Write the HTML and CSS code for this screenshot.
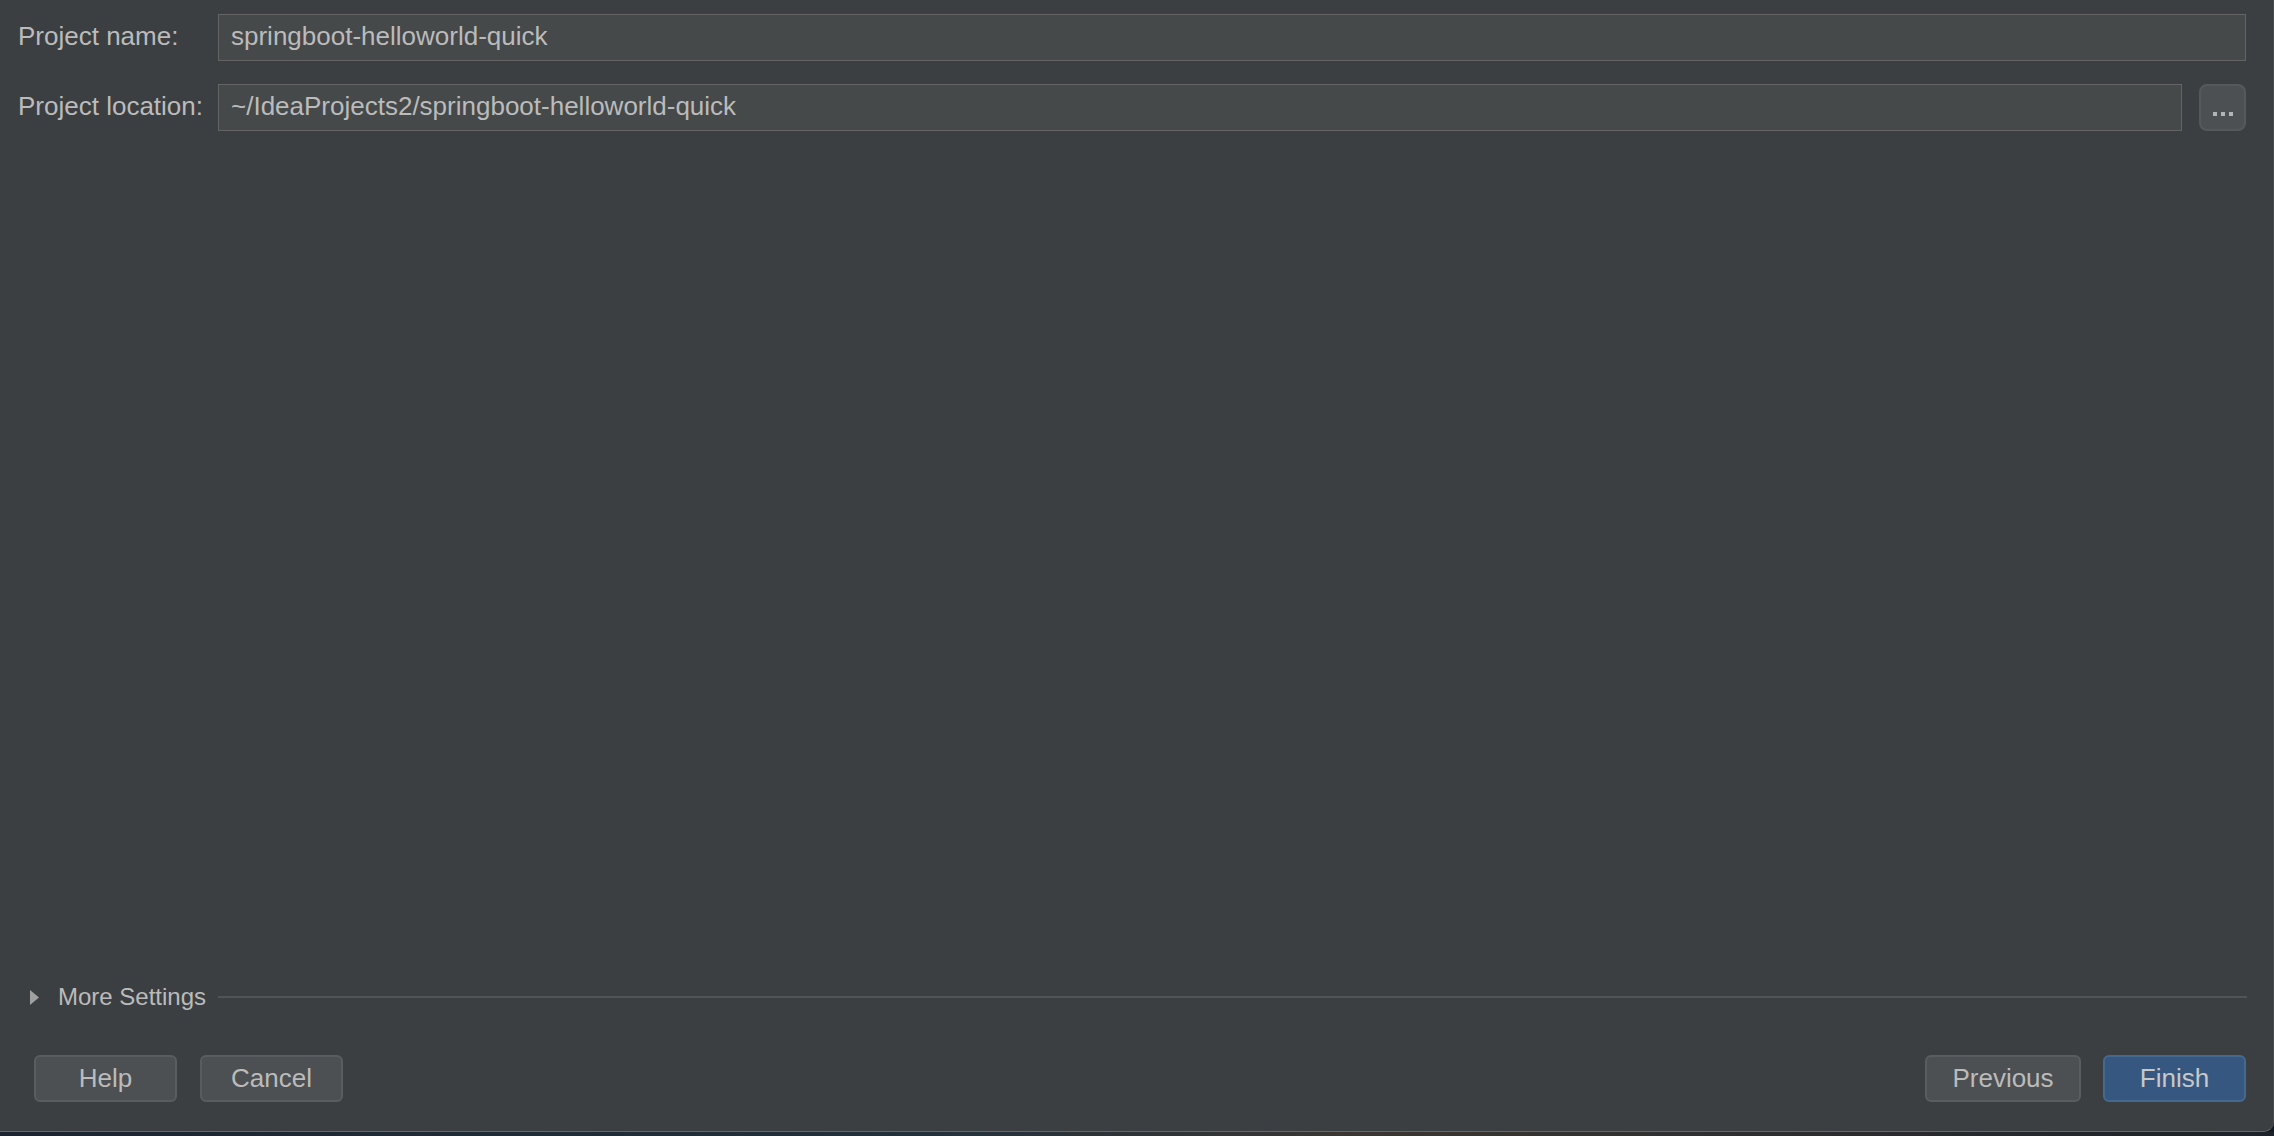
FILE: index.html
```html
<!DOCTYPE html>
<html>
<head>
  <title>New Project</title>
  <link rel="stylesheet" href="styles.css">
</head>
<body>
  <div class="window">
    <div class="form">
      <label class="label" for="project-name">Project name:</label>
      <div class="field wide"><input id="project-name" type="text" value="springboot-helloworld-quick"></div>

      <label class="label" for="project-location">Project location:</label>
      <div class="field"><input id="project-location" type="text" value="~/IdeaProjects2/springboot-helloworld-quick"></div>
      <button class="browse" title="Browse">
        <svg width="20" height="4" viewBox="0 0 20 4">
          <rect x="0" y="0" width="4" height="4" fill="#b4b4b4"/>
          <rect x="8" y="0" width="4" height="4" fill="#b4b4b4"/>
          <rect x="16" y="0" width="4" height="4" fill="#b4b4b4"/>
        </svg>
      </button>
    </div>

    <div class="spacer"></div>

    <div class="more-settings">
      <svg class="arrow" width="10" height="15" viewBox="0 0 10 15">
        <polygon points="0,0 9,7.5 0,15" fill="#a0a0a0"/>
      </svg>
      <span class="more-text">More Settings</span>
      <div class="rule"></div>
    </div>

    <div class="actions">
      <div class="group">
        <button class="btn">Help</button>
        <button class="btn">Cancel</button>
      </div>
      <div class="group">
        <button class="btn previous">Previous</button>
        <button class="btn primary">Finish</button>
      </div>
    </div>
  </div>
  <div class="desktop"></div>
</body>
</html>
```

FILE: styles.css
```css
html, body {
  margin: 0;
  height: 100%;
}
body {
  font-family: "Liberation Sans", Arial, sans-serif;
  background-color: #141a22;
  color: #bbbbbb;
  overflow: hidden;
}
.window {
  height: 1132px;
  background-color: #3c3f41;
  border-bottom: 1px solid #646668;
  border-right: 1px solid #4a4c4e;
  border-bottom-right-radius: 10px;
  box-sizing: border-box;
  width: 2274px;
  display: flex;
  flex-direction: column;
  padding: 14px 27px 29px 17px;
}
.desktop {
  height: 4px;
  background: linear-gradient(90deg, #1b2430, #22303c 40%, #3a3632 60%, #1c222a);
}
.form {
  display: grid;
  grid-template-columns: 201px 1fr 47px;
  row-gap: 23px;
  align-items: center;
}
.label {
  font-size: 26px;
  white-space: nowrap;
  padding-left: 1px;
  margin-top: -2px;
}
.field {
  height: 47px;
  box-sizing: border-box;
  border: 1px solid #646464;
  background-color: #45494a;
  display: flex;
  align-items: center;
}
.field.wide {
  grid-column: 2 / 4;
}
.field:not(.wide) {
  margin-right: 17px;
}
.field input {
  width: 100%;
  border: none;
  outline: none;
  background: transparent;
  color: #bbbbbb;
  font-family: "Liberation Sans", Arial, sans-serif;
  font-size: 26px;
  padding: 0 12px;
  margin-top: -2px;
}
.browse {
  width: 47px;
  height: 47px;
  box-sizing: border-box;
  border: 2px solid #55595b;
  border-radius: 8px;
  background-color: #4c5052;
  padding: 0;
  display: flex;
  align-items: flex-end;
  justify-content: center;
  padding-bottom: 13px;
}
.spacer {
  flex: 1;
}
.more-settings {
  display: flex;
  align-items: center;
  height: 30px;
  margin-bottom: 43px;
  padding-left: 13px;
}
.arrow {
  display: block;
}
.more-text {
  font-size: 24px;
  margin-left: 18px;
  margin-right: 12px;
  white-space: nowrap;
  color: #bbbbbb;
}
.rule {
  flex: 1;
  height: 2px;
  background-color: #515456;
  margin-right: -1px;
}
.actions {
  display: flex;
  justify-content: space-between;
  padding-left: 17px;
}
.group {
  display: flex;
  gap: 23px;
}
.group + .group {
  gap: 22px;
}
.btn {
  width: 143px;
  height: 47px;
  box-sizing: border-box;
  border: 2px solid #5a5d5f;
  border-radius: 6px;
  background-color: #4c5052;
  color: #bbbbbb;
  font-family: "Liberation Sans", Arial, sans-serif;
  font-size: 26px;
  padding: 0;
}
.btn.previous {
  width: 156px;
}
.btn.primary {
  background-color: #365880;
  border-color: #44698f;
  color: #c8c8c8;
}
```
